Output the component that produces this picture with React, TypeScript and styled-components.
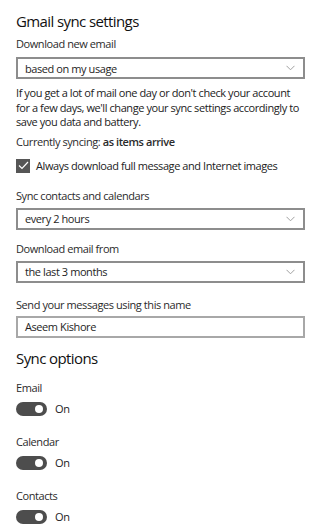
import React from "react";
import styled, { createGlobalStyle } from "styled-components";

const Global = createGlobalStyle`
  html, body { margin: 0; padding: 0; background: #ffffff; }
  body { font-family: "Open Sans", "Noto Sans", sans-serif; color: #222; }
`;

const Page = styled.div`
  width: 320px;
  height: 527px;
  box-sizing: border-box;
  padding: 11px 15px 0 16px;
  display: flex;
  flex-direction: column;
  overflow: hidden;
`;

const Heading = styled.h2<{ $mt?: number }>`
  margin: ${(p) => p.$mt ?? 0}px 0 0 0;
  font-size: 15px;
  line-height: 20px;
  font-weight: 400;
  color: #111;
  letter-spacing: -0.6px;
`;

const Label = styled.div<{ $mt?: number }>`
  margin-top: ${(p) => p.$mt ?? 0}px;
  font-size: 11px;
  line-height: 16px;
  color: #2b2b2b;
  letter-spacing: -0.42px;
`;

const Box = styled.div<{ $mt?: number; $h?: number; $light?: boolean }>`
  margin-top: ${(p) => p.$mt ?? 4}px;
  height: ${(p) => p.$h ?? 22}px;
  width: 289px;
  box-sizing: border-box;
  border: 2px solid ${(p) => (p.$light ? "#a8a8a8" : "#8d8d8d")};
  display: flex;
  align-items: center;
  justify-content: space-between;
  padding: 0 8px 0 7px;
  font-size: 11px;
  color: #1e1e1e;
  letter-spacing: -0.42px;
`;

const Chevron = () => (
  <svg width="9" height="6" viewBox="0 0 9 6">
    <polyline points="0.5,0.8 4.5,4.8 8.5,0.8" fill="none" stroke="#a0a0a0" strokeWidth="1" />
  </svg>
);

const Paragraph = styled.p`
  margin: 7px 0 0 0;
  font-size: 11px;
  line-height: 14.5px;
  color: #222;
  letter-spacing: -0.42px;
`;

const Strong = styled.span`
  font-weight: 600;
`;

const CheckRow = styled.div`
  margin-top: 8px;
  display: flex;
  align-items: center;
  gap: 6px;
  height: 16px;
  font-size: 11px;
  color: #222;
  letter-spacing: -0.42px;
`;

const CheckBox = styled.span`
  width: 14px;
  height: 14px;
  background: #565656;
  display: flex;
  align-items: center;
  justify-content: center;
`;

const ToggleRow = styled.div<{ $mt?: number }>`
  margin-top: ${(p) => p.$mt ?? 3}px;
  height: 20px;
  display: flex;
  align-items: center;
  gap: 8px;
  font-size: 11px;
  color: #222;
  letter-spacing: -0.3px;
`;

const Track = styled.span`
  width: 31px;
  height: 14px;
  border-radius: 7px;
  background: #4d4d4d;
  display: flex;
  align-items: center;
  justify-content: flex-end;
  padding-right: 4px;
  box-sizing: border-box;
`;

const Knob = styled.span`
  width: 8px;
  height: 8px;
  border-radius: 50%;
  background: #ffffff;
`;

const Select = ({ value, mt }: { value: string; mt?: number }) => (
  <Box $mt={mt}>
    <span>{value}</span>
    <Chevron />
  </Box>
);

const Toggle = () => (
  <ToggleRow>
    <Track>
      <Knob />
    </Track>
    <span>On</span>
  </ToggleRow>
);

export default function App() {
  return (
    <>
      <Global />
      <Page>
        <Heading>Gmail sync settings</Heading>
        <Label $mt={5}>Download new email</Label>
        <Select value="based on my usage" mt={5} />
        <Paragraph>
          If you get a lot of mail one day or don't check your account for a few days, we'll change
          your sync settings accordingly to save you data and battery.
        </Paragraph>
        <Label $mt={4}>
          Currently syncing: <Strong>as items arrive</Strong>
        </Label>
        <CheckRow>
          <CheckBox>
            <svg width="11" height="9" viewBox="0 0 11 9">
              <polyline points="1,4.5 4,7.5 10,1" fill="none" stroke="#fff" strokeWidth="1.2" />
            </svg>
          </CheckBox>
          <span>Always download full message and Internet images</span>
        </CheckRow>
        <Label $mt={14}>Sync contacts and calendars</Label>
        <Select value="every 2 hours" />
        <Label $mt={11}>Download email from</Label>
        <Select value="the last 3 months" />
        <Label $mt={14}>Send your messages using this name</Label>
        <Box $mt={3} $light>
          <span>Aseem Kishore</span>
        </Box>
        <Heading $mt={10}>Sync options</Heading>
        <Label $mt={12}>Email</Label>
        <Toggle />
        <Label $mt={15}>Calendar</Label>
        <Toggle />
        <Label $mt={15}>Contacts</Label>
        <Toggle />
      </Page>
    </>
  );
}
